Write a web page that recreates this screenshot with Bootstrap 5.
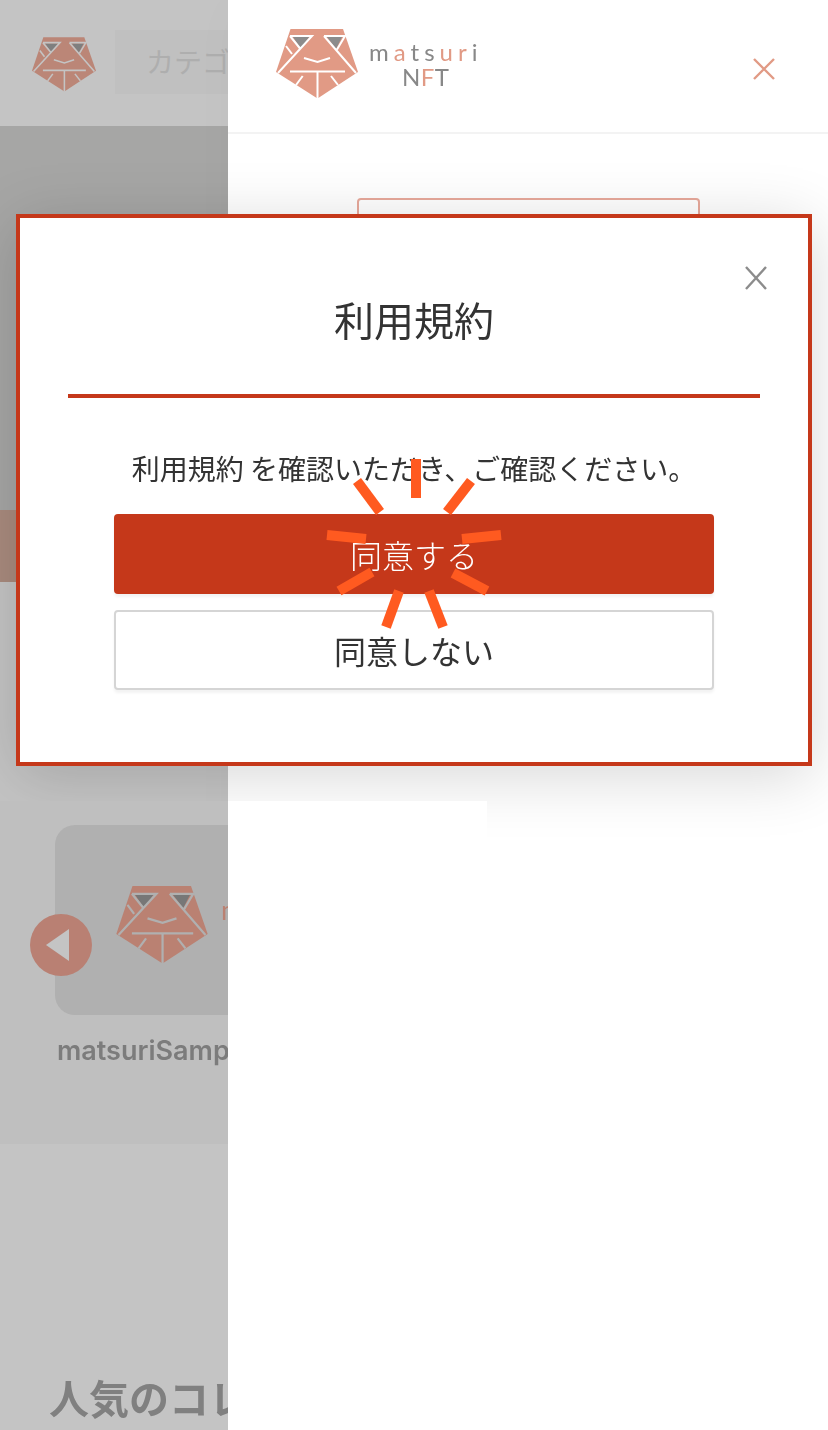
<!DOCTYPE html>
<html lang="ja">
<head>
  <meta charset="UTF-8" />
  <meta name="viewport" content="width=device-width, initial-scale=1.0"/>
  <title>matsuri NFT</title>
  <link href="https://cdn.jsdelivr.net/npm/bootstrap@5.3.2/dist/css/bootstrap.min.css" rel="stylesheet">
  <style>
    :root {
      --matsuri-red: #c5381a;
      --salmon: #e19a85;
      --dim-salmon: #ba8172;
      --ink: #333333;
    }

    body {
      width: 828px;
      height: 1430px;
      overflow: hidden;
      position: relative;
      background: #c4c4c4;
      font-family: "Noto Sans CJK JP", "Noto Sans", sans-serif;
      color: var(--ink);
    }

    /* page behind the drawer */
    .page-head {
      height: 126px;
      width: 228px;
      overflow: hidden;
      background: #c4c4c4;
      padding: 30px 0 0 32px;
      gap: 19px;
    }
    .head-logo { width: 64px; height: 55px; flex: none; margin-top: 7px; --logo-fill: #bb8677; --logo-line: #c4c4c4; --logo-eye: #7f7f7f; --logo-stroke: 2; }
    .cat-btn {
      width: 300px;
      height: 64px;
      flex: none;
      background: #c0c0c0;
      padding-left: 31px;
      font-size: 28px;
      line-height: 62px;
      color: #aeaeae;
      white-space: nowrap;
    }
    .hero-block { height: 384px; width: 228px; background: #a6a6a5; }
    .hero-band { height: 72px; width: 228px; background: #a98b7e; }
    .hero-rest { height: 219px; width: 228px; background: #c4c4c4; }

    /* drawer */
    .menu-drawer {
      --bs-offcanvas-width: 600px;
      --bs-offcanvas-zindex: 1;
      --bs-offcanvas-border-width: 0;
      box-shadow: 0 0 50px rgba(0, 0, 0, .02);
    }
    .drawer-head {
      height: 134px;
      border-bottom: 2px solid #f3f3f3;
      padding: 0 52px 0 48px;
    }
    .drawer-logo { width: 82px; height: 70px; flex: none; margin-top: -4px; --logo-fill: var(--salmon); --logo-line: #fff; --logo-eye: #8c8c8c; --logo-stroke: 2; }
    .logo-word {
      font-family: "Lato", sans-serif;
      color: #888888;
      text-align: center;
      line-height: 1;
      margin-left: 11px;
      margin-top: -4px;
    }
    .logo-word .word-top { font-size: 24px; letter-spacing: 5px; line-height: 25px; }
    .logo-word .word-bottom { font-size: 24px; letter-spacing: .5px; line-height: 25px; }
    .logo-word b { font-weight: 400; color: var(--salmon); }
    .drawer-close { width: 24px; height: 24px; margin-top: 6px; stroke: var(--salmon); }
    .outline-stub {
      width: 343px;
      height: 70px;
      margin: 64px 0 0 129px;
      border: 2px solid #e8a99b;
      border-radius: 4px;
    }

    /* modal */
    .terms-box {
      position: absolute;
      top: 214px;
      left: 16px;
      width: 796px;
      height: 552px;
      z-index: 2;
      background: #fff;
      border: 4px solid var(--matsuri-red);
      border-radius: 0;
      box-shadow: 0 10px 60px rgba(0, 0, 0, .16);
    }
    .terms-title {
      font-size: 40px;
      line-height: 48px;
      font-weight: 400;
      padding: 77px 0 51px;
      margin: 0;
      color: var(--ink);
    }
    .terms-rule { height: 4px; margin: 0 48px; background: var(--matsuri-red); }
    .terms-text { font-size: 28px; line-height: 36px; font-weight: 400; margin: 52px 0 28px; white-space: nowrap; }
    .terms-actions { padding: 0 94px; gap: 16px; }
    .terms-actions .btn {
      height: 80px;
      font-size: 32px;
      line-height: 1;
      font-weight: 400;
      border-radius: 4px;
      display: flex;
      align-items: center;
      justify-content: center;
      box-shadow: 0 3px 3px rgba(0, 0, 0, .05);
    }
    .terms-actions .btn-agree { background: var(--matsuri-red); border: 0; color: #fff; font-weight: 300; }
    .btn-decline { background: #fff; border: 2px solid #d5d5d5; color: var(--ink); }
    .terms-close { position: absolute; top: 48px; right: 40px; width: 24px; height: 24px; stroke: #8c8c8c; }
    .burst {
      position: absolute;
      top: -218px;
      left: -20px;
      width: 828px;
      height: 1430px;
      pointer-events: none;
      stroke: #ff5a20;
      stroke-width: 10;
    }

    /* lower part of the page sits over the modal's shadow */
    .lower-layer { position: relative; z-index: 3; width: 487px; height: 629px; }
    .lower-page { width: 228px; height: 629px; overflow: hidden; flex: none; background: #c4c4c4; }
    .lower-white { flex: 1; background: #fff; }
    .slider-band {
      height: 343px;
      background: #bfbfbf;
      padding: 24px 0 0 55px;
      position: relative;
    }
    .nft-tile {
      width: 400px;
      height: 190px;
      background: #b0b0b0;
      border-radius: 20px;
      padding: 61px 0 0 60px;
      gap: 12px;
    }
    .tile-logo { width: 94px; height: 78px; flex: none; --logo-fill: var(--dim-salmon); --logo-line: #b0b0b0; --logo-eye: #777; --logo-stroke: 2; }
    .tile-word { font-family: "Lato", sans-serif; font-size: 27px; line-height: 36px; margin-top: 6px; color: var(--dim-salmon); letter-spacing: 5px; }
    .nft-name {
      font-family: "Inter", sans-serif;
      font-weight: 600;
      font-size: 27px;
      line-height: 36px;
      color: #7c7c7c;
      margin: 18px 0 0 2px;
      white-space: nowrap;
    }
    .slide-prev { position: absolute; left: 30px; top: 113px; width: 62px; height: 62px; }
    .popular-title {
      font-size: 40px;
      font-weight: 700;
      line-height: 48px;
      color: #808080;
      white-space: nowrap;
      margin: 229px 0 0 49px;
    }
  </style>
</head>
<body>

  <svg width="0" height="0" class="d-block position-absolute">
    <symbol id="matsuriFace" viewBox="0 0 82 70">
      <polygon points="14.5,0 67,0 82,43 41.5,69.5 0,43" fill="var(--logo-fill)"/>
      <polygon points="17,8 33,8 25,20" fill="var(--logo-eye)"/>
      <polygon points="51,8 66,8 60,20" fill="var(--logo-eye)"/>
      <g fill="none" stroke="var(--logo-line)" stroke-width="var(--logo-stroke)">
        <path d="M14,7 H36 L2,44 M14,7 L24.5,20"/>
        <path d="M48,7 H69 L61,20.5 M48,7 L80,44"/>
        <path d="M10,17 L16,25"/>
        <path d="M28,29 L41.5,33 L54,29"/>
        <path d="M14,42.5 H69"/>
        <path d="M41.5,42.5 V70"/>
        <path d="M26.7,47 L20,56"/>
        <path d="M55,47 L62,56"/>
      </g>
    </symbol>
  </svg>

  <header class="page-head d-flex">
    <svg class="head-logo"><use href="#matsuriFace"/></svg>
    <div class="cat-btn">カテゴリー</div>
  </header>
  <div class="hero-block"></div>
  <div class="hero-band"></div>
  <div class="hero-rest"></div>

  <div class="lower-layer d-flex">
    <div class="lower-page">
      <section class="slider-band">
        <div class="nft-tile d-flex">
          <svg class="tile-logo"><use href="#matsuriFace"/></svg>
          <span class="tile-word">matsuri</span>
        </div>
        <div class="nft-name">matsuriSample</div>
        <svg class="slide-prev" viewBox="0 0 62 62">
          <circle cx="31" cy="31" r="31" fill="#b98073"/>
          <polygon points="16,31 39,15 39,47" fill="#c4c4c4"/>
        </svg>
      </section>
      <h2 class="popular-title">人気のコレクション</h2>
    </div>
    <div class="lower-white"></div>
  </div>

  <aside class="offcanvas offcanvas-end show menu-drawer">
    <div class="drawer-head d-flex align-items-center">
      <svg class="drawer-logo"><use href="#matsuriFace"/></svg>
      <div class="logo-word">
        <div class="word-top">m<b>a</b>ts<b>u</b><b>r</b>i</div>
        <div class="word-bottom">N<b>F</b>T</div>
      </div>
      <svg class="drawer-close ms-auto" viewBox="0 0 24 24" fill="none" stroke-width="2.4"><path d="M2,2 L22,22 M22,2 L2,22"/></svg>
    </div>
    <div class="outline-stub"></div>
  </aside>

  <div class="modal-content terms-box">
    <svg class="terms-close" viewBox="0 0 24 24" fill="none" stroke-width="2.4"><path d="M2,1 L22,23 M22,1 L2,23"/></svg>
    <h1 class="terms-title text-center">利用規約</h1>
    <div class="terms-rule"></div>
    <p class="terms-text text-center">利用規約 を確認いただき、ご確認ください。</p>
    <div class="terms-actions d-flex flex-column">
      <button type="button" class="btn btn-agree w-100">同意する</button>
      <button type="button" class="btn btn-decline w-100">同意しない</button>
    </div>
    <svg class="burst" viewBox="0 0 828 1430">
      <path d="M416,459 V498"/>
      <path d="M357,481 L380,512"/>
      <path d="M471,481 L447,512"/>
      <path d="M327,535 L366,539"/>
      <path d="M501,535 L462,539"/>
      <path d="M372,572 L339,591"/>
      <path d="M453,573 L487,591"/>
      <path d="M399,591 L386,627"/>
      <path d="M429,591 L443,627"/>
    </svg>
  </div>

</body>
</html>
